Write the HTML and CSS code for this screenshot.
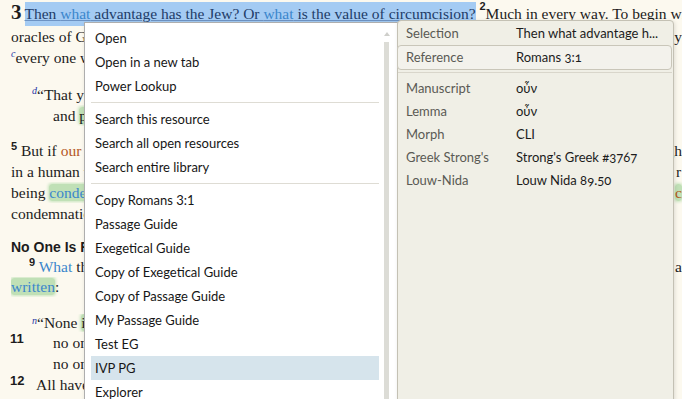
FILE: index.html
```html
<!DOCTYPE html>
<html lang="en">
<head>
    <meta charset="UTF-8">
    <title>Romans 3 - Context Menu</title>
    <link rel="stylesheet" href="styles.css">
</head>
<body>
<div class="page">
    <div class="line first">
        <span class="chap">3</span><span class="sel">Then <span class="w">what</span> advantage has the Jew? Or <span class="w">what</span> is the value of circumcision?</span>
        <sup class="vn">2</sup>Much in every way. To begin with, the Jews
    </div>
    <div class="line l2"><span class="txt">oracles of God. <sup class="vn">3</sup>What if some were unfaithful?</span><span class="tail"><sup class="vn">4</sup>&nbsp;By</span></div>
    <div class="line"><span class="txt"><sup class="fn">c</sup>every one were a liar, as it is written,</span></div>

    <div class="line poem gap"><span class="txt"><sup class="fn">d</sup>“That you may be justified in your words,</span></div>
    <div class="line poem in2"><span class="txt">and <span class="hl">prevail</span> when you are judged.”</span></div>

    <div class="line gap2"><span class="txt"><sup class="vn">5</sup> But if <span class="our">our</span> unrighteousness serves to show</span><span class="tail">gh</span></div>
    <div class="line"><span class="txt">in a human way.) By no means!</span><span class="tail">r</span></div>
    <div class="line"><span class="txt">being <span class="hl w">condemned</span> as a sinner?</span><span class="tail"><span class="hl our">c</span></span></div>
    <div class="line"><span class="txt">condemnation is just.</span></div>

    <div class="heading">No One Is Righteous</div>
    <div class="line par"><span class="txt"><sup class="vn">9</sup> <span class="w">What</span> then? Are we Jews any better off?</span><span class="tail">s a</span></div>
    <div class="line short"><span class="txt"><span class="hl w">written</span>:</span></div>

    <div class="line poem gap3"><span class="txt"><sup class="fn">n</sup>“None <span class="hl">is</span> righteous, no, not one;</span></div>
    <div class="line verse"><span class="num">11</span><span class="txt in2">no one understands;</span></div>
    <div class="line tall"><span class="txt in2">no one seeks for God.</span></div>
    <div class="line verse"><span class="num">12</span><span class="txt in3">All have turned aside;</span></div>
</div>

<div class="menu">
    <div class="menu-list">
        <div class="item">Open</div>
        <div class="item">Open in a new tab</div>
        <div class="item">Power Lookup</div>
        <div class="sep"></div>
        <div class="item">Search this resource</div>
        <div class="item">Search all open resources</div>
        <div class="item">Search entire library</div>
        <div class="sep"></div>
        <div class="item">Copy Romans 3:1</div>
        <div class="item">Passage Guide</div>
        <div class="item">Exegetical Guide</div>
        <div class="item">Copy of Exegetical Guide</div>
        <div class="item">Copy of Passage Guide</div>
        <div class="item">My Passage Guide</div>
        <div class="item">Test EG</div>
        <div class="item active">IVP PG</div>
        <div class="item">Explorer</div>
    </div>
    <div class="scroll">
        <span class="arrow"></span>
        <span class="track"></span>
    </div>
</div>

<div class="panel">
    <div class="row"><span class="label">Selection</span><span class="value">Then what advantage h...</span></div>
    <div class="row ref"><span class="label">Reference</span><span class="value">Romans 3:1</span></div>
    <div class="panel-sep"></div>
    <div class="row"><span class="label">Manuscript</span><span class="value">οὖν</span></div>
    <div class="row"><span class="label">Lemma</span><span class="value">οὖν</span></div>
    <div class="row"><span class="label">Morph</span><span class="value">CLI</span></div>
    <div class="row"><span class="label">Greek Strong's</span><span class="value">Strong's Greek #3767</span></div>
    <div class="row"><span class="label">Louw-Nida</span><span class="value">Louw Nida 89.50</span></div>
</div>
</body>
</html>
```

FILE: styles.css
```css
body {
    margin: 0;
    width: 682px;
    height: 399px;
    overflow: hidden;
    position: relative;
    background-color: #fcf9ef;
    font-family: "Liberation Serif", serif;
    color: #1c1c1c;
}
.page {
    padding-left: 11px;
    width: 671px;
}
.line {
    display: flex;
    height: 21px;
    line-height: 21px;
    font-size: 15.5px;
    white-space: nowrap;
}
.line .txt {
    flex: 1;
    min-width: 0;
    overflow: hidden;
}
.line .tail {
    flex: 0 0 6px;
    margin-left: auto;
    overflow: visible;
}
.line.first {
    display: block;
    height: 24px;
    line-height: 24px;
}
.line.l2 {
    margin-top: 2px;
}
.line.gap {
    margin-top: 16px;
}
.line.gap2 {
    margin-top: 14px;
}
.line.gap3 {
    margin-top: 17px;
    height: 18px;
    line-height: 18px;
}
.line.short {
    height: 20px;
    line-height: 20px;
}
.line.tall {
    height: 21px;
}
.line.poem {
    padding-left: 21px;
}
.line.poem.in2 {
    padding-left: 42px;
}
.line.par {
    padding-left: 18px;
}
.in2 {
    padding-left: 42px;
}
.in3 {
    padding-left: 25px;
}
.chap {
    font-weight: bold;
    font-size: 21px;
    margin-right: 3px;
}
.sel {
    background: #a4cbf3;
    color: #1e3c68;
    padding: 3px 0 4px;
    text-decoration: underline;
    text-decoration-color: #6d93c4;
}
.w {
    color: #3b86cc;
}
.our {
    color: #b4561d;
}
.hl {
    background: #c0e0b6;
    border-radius: 3px;
    box-shadow: 0 0 3px 1px #c9e5c0;
}
.vn {
    font-family: "Liberation Sans", sans-serif;
    font-weight: bold;
    font-size: 11px;
    vertical-align: top;
    line-height: 12px;
}
.fn {
    font-style: italic;
    font-size: 10px;
    color: #2637a6;
    vertical-align: top;
    line-height: 14px;
}
.heading {
    font-family: "Liberation Sans", sans-serif;
    font-weight: bold;
    font-size: 14px;
    height: 18px;
    line-height: 18px;
    margin-top: 14px;
}
.num {
    font-family: "Liberation Sans", sans-serif;
    font-weight: bold;
    font-size: 13px;
    line-height: 14px;
    width: 0;
    overflow: visible;
    margin-left: -1px;
}
.verse .txt.in2 {
    padding-left: 43px;
}
.verse .txt.in3 {
    padding-left: 26px;
}

.menu {
    position: absolute;
    left: 84px;
    top: 22px;
    width: 312px;
    height: 390px;
    background: #fff;
    border: 1px solid #aeaeae;
    box-shadow: 2px 2px 5px rgba(0, 0, 0, 0.18);
    display: flex;
    font-family: Lato, sans-serif;
    font-size: 13px;
    color: #161616;
}
.menu-list {
    width: 288px;
    margin-left: 6px;
    padding-top: 3px;
}
.item {
    height: 24px;
    line-height: 24px;
    padding-left: 4px;
}
.item.active {
    background: #d6e4ec;
}
.sep {
    height: 1px;
    background: #dedcd4;
    margin: 4px 0;
}
.scroll {
    width: 5px;
    margin-left: 5px;
    display: flex;
    flex-direction: column;
    align-items: center;
}
.scroll .arrow {
    margin-top: 9px;
    width: 0;
    height: 0;
    border-left: 3px solid transparent;
    border-right: 3px solid transparent;
    border-bottom: 4px solid #cfcfcb;
}
.scroll .track {
    margin-top: 6px;
    width: 5px;
    flex: 1;
    background: #dcdcd6;
}

.panel {
    position: absolute;
    left: 397px;
    top: 20px;
    width: 275px;
    height: 390px;
    background: #f0efe6;
    border: 1px solid #c4c1b4;
    border-radius: 4px 4px 0 0;
    box-shadow: 1px 1px 4px rgba(0, 0, 0, 0.12);
    font-family: Lato, sans-serif;
    font-size: 13px;
}
.row {
    display: flex;
    height: 24px;
    line-height: 24px;
    padding-left: 8px;
}
.row .label {
    width: 110px;
    color: #5a5a54;
}
.row .value {
    color: #1c1c1c;
    font-variant-numeric: oldstyle-nums;
}
.row.ref {
    height: 23px;
    line-height: 23px;
    margin-left: -1px;
    margin-right: 1px;
    padding-left: 8px;
    border: 1px solid #c9c6b9;
    border-radius: 4px;
    background: #f3f2ec;
}
.panel-sep {
    height: 1px;
    background: #d9d6cb;
    margin: 2px 1px 4px 0;
}
.panel-sep ~ .row {
    height: 23px;
    line-height: 23px;
}
```
